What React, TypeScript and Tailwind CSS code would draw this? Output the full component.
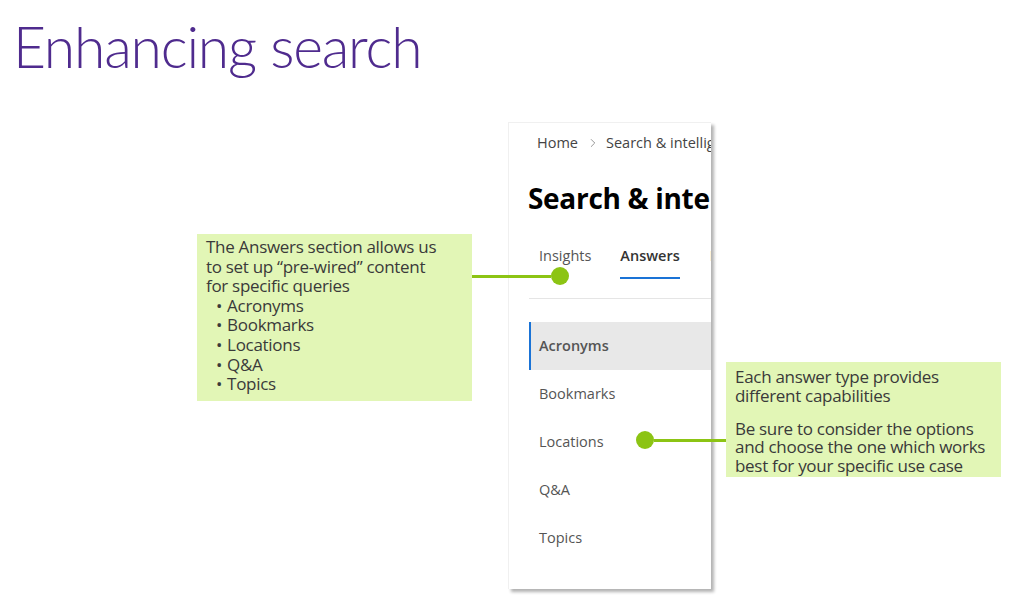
import React from 'react';
import { ChevronRight } from 'lucide-react';

const navItems = ['Acronyms', 'Bookmarks', 'Locations', 'Q&A', 'Topics'];
const answerTypes = ['Acronyms', 'Bookmarks', 'Locations', 'Q&A', 'Topics'];

function Connector({ className, dotSide }: { className: string; dotSide: 'left' | 'right' }) {
  return (
    <div className={`absolute flex items-center ${className}`}>
      {dotSide === 'left' && <div className="w-[18px] h-[18px] rounded-full bg-[#8cc414] shrink-0" />}
      <div className="flex-1 h-[3px] bg-[#8cc414]" />
      {dotSide === 'right' && <div className="w-[18px] h-[18px] rounded-full bg-[#8cc414] shrink-0" />}
    </div>
  );
}

export default function App() {
  return (
    <div className="relative w-[1024px] h-[614px] bg-white overflow-hidden" style={{ fontFamily: '"Open Sans", "Noto Sans", sans-serif' }}>
      <h1
        className="pl-[13px] pt-[10px] text-[57px] leading-[72px] font-light text-[#4f2b8e] tracking-[-1.2px]"
        style={{ fontFamily: 'Lato, "Open Sans", sans-serif' }}
      >
        Enhancing search
      </h1>

      {/* screenshot of the admin page */}
      <div className="absolute left-[508px] top-[122px] w-[203px] h-[467px] bg-white overflow-hidden shadow-[3px_3px_3px_rgba(0,0,0,0.3)] border-t border-l border-[#f0f0f0]">
        <div className="pl-[28px] pt-[9px] flex items-center text-[14.5px] text-[#444] whitespace-nowrap">
          <span>Home</span>
          <ChevronRight size={14} strokeWidth={1.3} className="text-[#777] ml-[8px] mr-[6px] shrink-0" />
          <span>Search &amp; intelligence</span>
        </div>
        <div className="pl-[19px] pt-[25px] text-[28px] leading-[38px] font-bold text-black whitespace-nowrap tracking-[-0.3px]">
          Search &amp; intelligence
        </div>
        <div className="pl-[30px] pt-[28px] flex gap-[30px] text-[14.5px] whitespace-nowrap">
          <div className="pb-[10px] text-[#555]">Insights</div>
          <div className="pb-[10px] text-[#333] font-semibold border-b-2 border-[#1a73d6] -ml-[1px]">Answers</div>
          <div className="pb-[10px] text-[#555]">Bookmarks</div>
        </div>
        <div className="ml-[20px] mt-[19px] h-px bg-[#e5e5e5]" />
        <div className="ml-[20px] mt-[23px] flex flex-col">
          {navItems.map((item, i) => (
            <div
              key={item}
              className={`h-[48px] flex items-center text-[14.5px] text-[#555] ${i === 0 ? 'pl-[8px] bg-[#e8e8e8] border-l-2 border-[#1a73d6] font-semibold' : 'pl-[10px]'}`}
            >
              {item}
            </div>
          ))}
        </div>
      </div>

      {/* callout left */}
      <div className="absolute left-[197px] top-[234px] w-[275px] h-[167px] bg-[#e2f6b6] pl-[9px] pt-[3px] text-[17px] leading-[19.6px] text-[#3a3a3a] tracking-[-0.3px] whitespace-nowrap">
        <p>
          The Answers section allows us
          <br />
          to set up “pre-wired” content
          <br />
          for specific queries
        </p>
        <ul className="pl-[10px]">
          {answerTypes.map((t) => (
            <li key={t} className="flex gap-[5px]">
              <span>•</span>
              <span>{t}</span>
            </li>
          ))}
        </ul>
      </div>
      <Connector className="left-[472px] top-[267px] w-[97px]" dotSide="right" />

      {/* callout right */}
      <div className="absolute left-[726px] top-[362px] w-[275px] h-[115px] bg-[#e2f6b6] pl-[9px] pt-[6px] text-[17px] leading-[18.8px] text-[#3a3a3a] tracking-[-0.3px] whitespace-nowrap">
        <p>
          Each answer type provides
          <br />
          different capabilities
        </p>
        <p className="mt-[14px]">
          Be sure to consider the options
          <br />
          and choose the one which works
          <br />
          best for your specific use case
        </p>
      </div>
      <Connector className="left-[636px] top-[431px] w-[90px]" dotSide="left" />
    </div>
  );
}
